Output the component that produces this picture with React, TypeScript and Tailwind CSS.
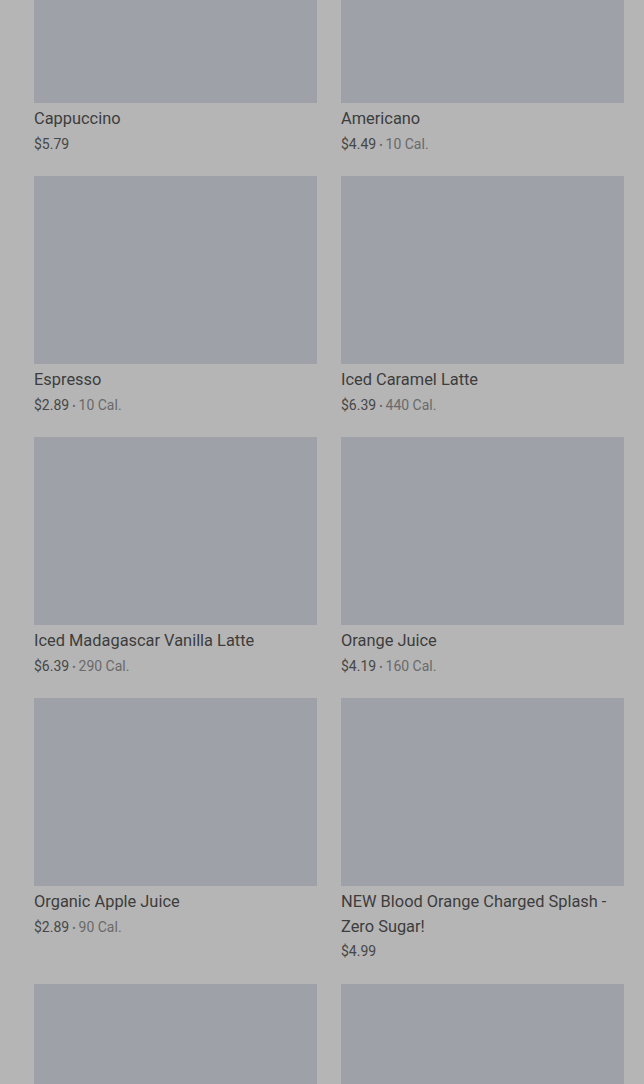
import React from "react";

type Item = {
  name: string;
  price: string;
  cal?: string;
};

const items: Item[] = [
  { name: "Cappuccino", price: "$5.79" },
  { name: "Americano", price: "$4.49", cal: "10 Cal." },
  { name: "Espresso", price: "$2.89", cal: "10 Cal." },
  { name: "Iced Caramel Latte", price: "$6.39", cal: "440 Cal." },
  { name: "Iced Madagascar Vanilla Latte", price: "$6.39", cal: "290 Cal." },
  { name: "Orange Juice", price: "$4.19", cal: "160 Cal." },
  { name: "Organic Apple Juice", price: "$2.89", cal: "90 Cal." },
  { name: "NEW Blood Orange Charged Splash - Zero Sugar!", price: "$4.99" },
  { name: "", price: "" },
  { name: "", price: "" },
];

const MenuCard: React.FC<{ item: Item }> = ({ item }) => {
  return (
    <div className="flex flex-col">
      <div className="h-[188px] w-full bg-[#9ea1a7]" />
      {item.name && (
        <div className="mt-1">
          <p className="text-[16.4px] leading-[1.5] text-[#3d3d3d]">{item.name}</p>
          <p className="h-6 text-sm leading-6 text-[#474747]">
            {item.price}
            {item.cal && (
              <>
                <span className="mx-[3px] text-[10px] leading-none text-[#6a6a6a]">•</span>
                <span className="text-[#6a6a6a]">{item.cal}</span>
              </>
            )}
          </p>
        </div>
      )}
    </div>
  );
};

const App: React.FC = () => {
  return (
    <div
      className="h-[1084px] w-full overflow-hidden bg-[#b5b5b5]"
      style={{ fontFamily: "Roboto, 'Liberation Sans', sans-serif" }}
    >
      <div className="-mt-[85px] grid grid-cols-2 gap-x-6 gap-y-[20.4px] pl-[34px] pr-[20px]">
        {items.map((item, i) => (
          <MenuCard key={i} item={item} />
        ))}
      </div>
    </div>
  );
};

export default App;
